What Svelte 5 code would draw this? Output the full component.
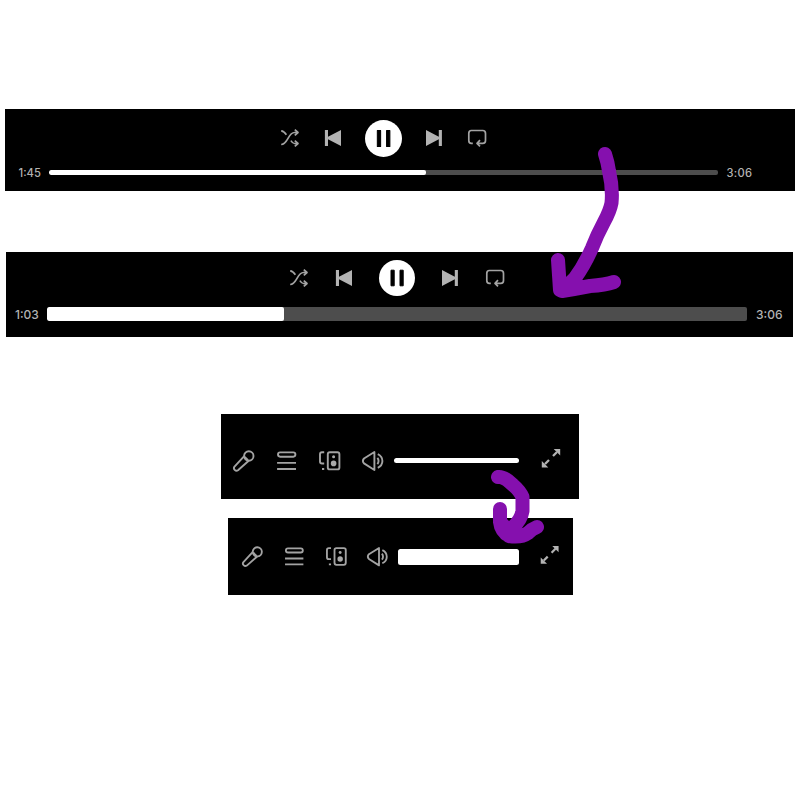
<script>
  const players = [
    { id: 'thin', now: '1:45', total: '3:06', progress: 56.4 },
    { id: 'thick', now: '1:03', total: '3:06', progress: 33.9 }
  ];
  const volumes = ['slim', 'bold'];
</script>

{#snippet shuffle()}
  <svg class="icon line shuffle" viewBox="0 0 24 24">
    <path d="M3.2 4.8C5.6 5 7 6.6 8.4 8.7M3.2 18.5C10 18.5 10 6.5 16.5 6.5H19.5M12.9 14.6C14 16.3 15 17.5 16.5 17.5H19.5M16.8 3.7L20 6.5L16.8 9.3M16.8 14.7L20 17.5L16.8 20.3" />
  </svg>
{/snippet}

{#snippet previous()}
  <svg class="icon solid" viewBox="0 0 24 24"><path d="M3.9 4H7V10.7L20 4V20L7 13.3V20H3.9Z" /></svg>
{/snippet}

{#snippet next()}
  <svg class="icon solid" viewBox="0 0 24 24"><path d="M19.9 4H16.8V10.7L4 4V20L16.8 13.3V20H19.9Z" /></svg>
{/snippet}

{#snippet repeat()}
  <svg class="icon line repeat" viewBox="0 0 24 24">
    <path d="M7.8 17.3H6.3Q3.8 17.3 3.8 14.4V7.4Q3.8 4.5 6.3 4.5H17.8Q20.5 4.5 20.5 7.4V14.4Q20.5 17.3 17.8 17.3H12.5M15 14.1L12 17.3L15 20.3" />
  </svg>
{/snippet}

<main>
  {#each players as p}
    <section class="player {p.id}">
      <div class="controls">
        {@render shuffle()}
        {@render previous()}
        <svg class="play" viewBox="0 0 36 36">
          <circle cx="18" cy="18" r="18" fill="#fff" />
          <path d="M12 10.2H15.2V25.8H12ZM21 10.2H24.2V25.8H21Z" fill="#000" stroke="#000" stroke-linejoin="round" />
        </svg>
        {@render next()}
        {@render repeat()}
      </div>
      <div class="timeline">
        <span class="now">{p.now}</span>
        <div class="track"><div class="fill" style:width="{p.progress}%"></div></div>
        <span class="total">{p.total}</span>
      </div>
    </section>
  {/each}

  {#each volumes as v}
    <section class="volume {v}">
      <svg class="icon line mic" viewBox="0 0 24 24">
        <circle cx="16.8" cy="7" r="4.7" />
        <path d="M12.2 7.2L2.5 17.7Q1.2 19.3 2.7 20.8Q4.3 22.4 6 21.2L16.7 11.8M12.7 8L16 11.2" />
      </svg>
      <svg class="icon line queue" viewBox="0 0 24 24">
        <rect x="3" y="3.4" width="17.4" height="4.3" rx="2.1" />
        <path d="M2.1 13.9H21M2.1 20H21" />
      </svg>
      <svg class="icon line device" viewBox="0 0 24 24">
        <path d="M6.2 3.2H4Q2 3.2 2 5.2V12.5Q2 14.5 4 14.5H6.2M4 20H6.2" />
        <rect x="9.8" y="3.2" width="11.6" height="17.2" rx="2" />
        <circle cx="15.6" cy="14.4" r="2.8" fill="#aaa" stroke="none" />
        <circle cx="15.6" cy="7.8" r="1.5" fill="#aaa" stroke="none" />
      </svg>
      <svg class="icon line speaker" viewBox="0 0 24 24">
        <path d="M13.4 3V21L3 14.4Q.8 12 3 9.5ZM16.4 8.9Q18.7 12 16.4 15.1M16.8 5.2Q21.4 7.4 21.4 12T16.8 18.8" />
      </svg>
      <div class="level"></div>
      <svg class="icon expand" viewBox="0 0 24 24">
        <path d="M14 10L18 6M10 14L6 18" fill="none" stroke="#b3b3b3" stroke-width="2.3" />
        <path d="M14.7 3H21.2V9.5ZM9.3 21.4H2.8V14.9Z" fill="#b3b3b3" />
      </svg>
    </section>
  {/each}

  <svg class="marks" viewBox="0 0 800 800">
    <path d="M605 154C607 160 608 163 609 171Q613 188 611.5 203Q610 211 604 222Q597 235 592 248Q584 266 575 278L562 291M558 260L560 290L562 291L574 289L590 286Q605 285 614 282M566 286L576 282" />
    <path d="M498 477Q504 476 513 485Q520 491 522.5 497V511Q521 520 513 527L506 534M500 509V522Q501 531 509 536Q521 538 528 533Q532 529 537 527M502 524L512 534" />
  </svg>
</main>

<style>
  :global(body) { margin: 0; background: #fff; }
  main {
    position: relative;
    width: 800px;
    height: 800px;
    overflow: hidden;
    background: #fff;
    font-family: Inter, "Liberation Sans", sans-serif;
    display: flex;
    flex-direction: column;
    align-items: flex-start;
  }
  section { background: #000; box-sizing: border-box; flex: none; }
  svg { display: block; flex: none; }
  .icon { width: 24px; height: 24px; }
  .line { fill: none; stroke: #a3a3a3; stroke-width: 1.9; stroke-linejoin: round; }
  .shuffle, .repeat { stroke-width: 1.7; }
  .solid { fill: #b3b3b3; }

  .controls { display: flex; align-items: center; height: 37px; }
  .timeline { display: flex; align-items: center; color: #b3b3b3; font-weight: 500; }
  .track { background: #4d4d4d; flex: none; overflow: hidden; }
  .fill { height: 100%; background: #fff; border-radius: inherit; }

  .thin { width: 790px; height: 82px; margin: 109px 0 0 5px; padding-top: 10.5px; }
  .thin .controls { padding-left: 272.6px; gap: 19px; }
  .thin .play { width: 37px; height: 37px; margin: 0 1.5px 0 1.2px; }
  .thin .timeline { height: 14px; margin-top: 9px; padding-left: 13.5px; font-size: 11.2px; }
  .thin .now { width: 30.5px; }
  .thin .track { width: 669px; height: 4.5px; border-radius: 2px; }
  .thin .total { margin-left: 8.5px; letter-spacing: 0.3px; }

  .thick { width: 787px; height: 85px; margin: 61px 0 0 6px; padding-top: 7.2px; }
  .thick .controls { padding-left: 280.7px; gap: 21px; }
  .thick .play { width: 36px; height: 36px; margin: 0 2.2px; }
  .thick .timeline { height: 14px; margin-top: 11px; padding-left: 9px; font-size: 12px; }
  .thick .now { width: 32px; }
  .thick .track { width: 700px; height: 13.5px; border-radius: 2px; }
  .thick .total { margin-left: 9px; }

  .volume { display: flex; align-items: center; }
  .level { background: #fff; flex: none; }

  .slim { width: 358px; height: 85px; margin: 77px 0 0 221px; padding: 8px 0 0 11px; }
  .slim .queue { margin-left: 19px; }
  .slim .device { margin-left: 19px; }
  .slim .speaker { margin-left: 19px; }
  .slim .level { width: 125px; height: 5.5px; margin-left: 9px; border-radius: 3px; }
  .slim .expand { margin: -5px 0 0 20px; }

  .bold { width: 345px; height: 77px; margin: 19px 0 0 228px; padding: 1px 0 0 13.3px; }
  .bold .icon { width: 23.3px; height: 23.3px; }
  .bold .queue { margin-left: 18.7px; }
  .bold .device { margin-left: 18px; }
  .bold .speaker { margin-left: 18px; }
  .bold .level { width: 121px; height: 16px; margin-left: 8.4px; border-radius: 2.5px; }
  .bold .expand { margin: -5px 0 0 19.5px; }

  .marks { position: absolute; inset: 0; width: 800px; height: 800px; }
  .marks path { fill: none; stroke: #8510ae; stroke-width: 14; stroke-linecap: round; stroke-linejoin: round; }
</style>
